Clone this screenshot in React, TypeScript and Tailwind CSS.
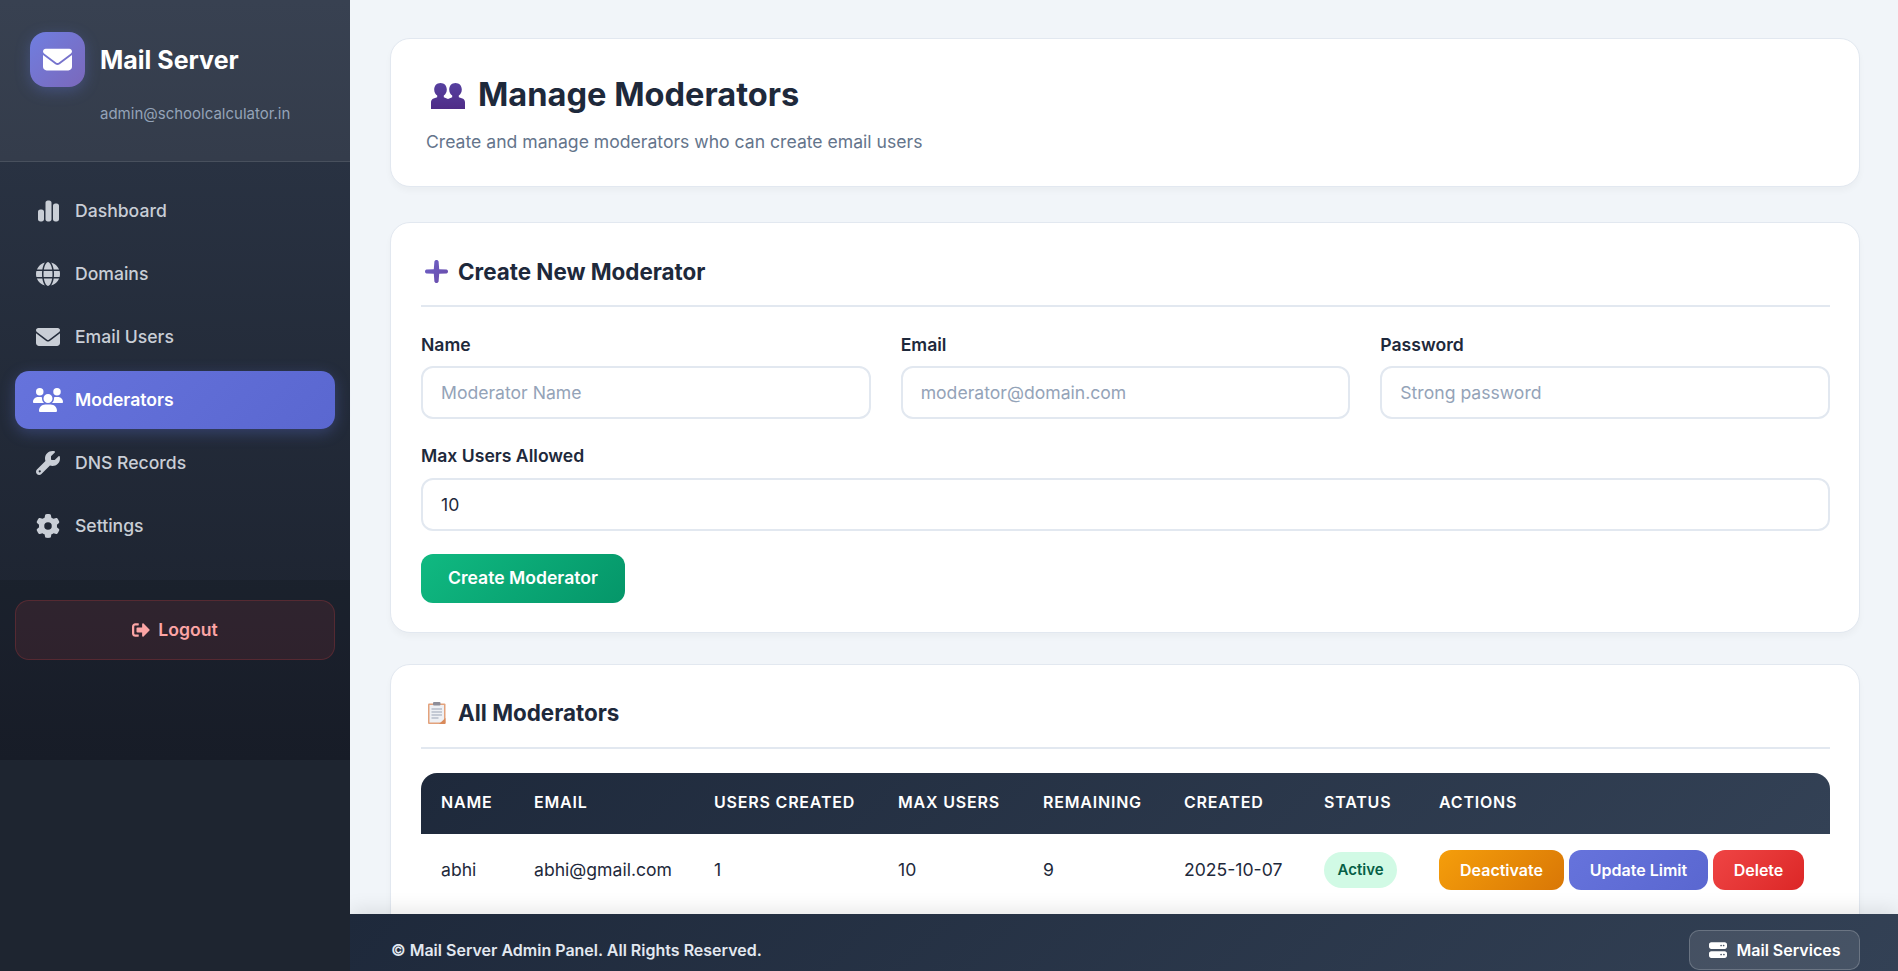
import React from "react";
import { FaEnvelope, FaGlobe, FaUsers, FaWrench, FaGear, FaServer, FaChartSimple } from "react-icons/fa6";
import { FaSignOutAlt } from "react-icons/fa";

const navItems = [
  { label: "Dashboard", icon: FaChartSimple, size: "w-[21px] h-[24px]" },
  { label: "Domains", icon: FaGlobe, size: "w-[24px] h-[24px]" },
  { label: "Email Users", icon: FaEnvelope, size: "w-[24px] h-[24px]" },
  { label: "Moderators", icon: FaUsers, size: "w-[30px] h-[24px]", active: true },
  { label: "DNS Records", icon: FaWrench, size: "w-[24px] h-[24px]" },
  { label: "Settings", icon: FaGear, size: "w-[24px] h-[24px]" },
];

const PeopleIcon = () => (
  <svg width="34" height="26" viewBox="0 0 34 26" className="shrink-0 mt-[3px]">
    <defs>
      <linearGradient id="people" x1="0" y1="0" x2="0" y2="1">
        <stop offset="0" stopColor="#56409f" />
        <stop offset="1" stopColor="#4f2c87" />
      </linearGradient>
    </defs>
    <path
      fill="url(#people)"
      d="M9.500 0c3.800 0 6.300 2.800 6.300 6.500 0 2.600-1.200 4.900-3 6.100v1.600c1.700.7 3.200 1.300 4.200 1.900V26H0v-6.500c0-2 1-3.200 2.600-3.900l3.600-1.400v-1.600C4.400 11.400 3.200 9.100 3.200 6.500 3.200 2.800 5.700 0 9.500 0z"
    />
    <path
      fill="url(#people)"
      d="M24.500 0c3.800 0 6.300 2.800 6.300 6.500 0 2.600-1.200 4.900-3 6.100v1.600l3.600 1.400c1.600.7 2.600 1.900 2.600 3.900V26H17V16.100c1-.6 2.500-1.200 4.200-1.900v-1.600c-1.800-1.200-3-3.500-3-6.100C18.200 2.800 20.700 0 24.500 0z"
    />
  </svg>
);

const PlusIcon = () => (
  <svg width="23" height="23" viewBox="0 0 23 23" className="shrink-0">
    <defs>
      <linearGradient id="plus" x1="0" y1="0" x2="1" y2="1">
        <stop offset="0" stopColor="#6d62c8" />
        <stop offset="1" stopColor="#6a4aa8" />
      </linearGradient>
    </defs>
    <path
      fill="url(#plus)"
      d="M11.500 0c1.100 0 1.900.6 2.100 1.500l.6 7.800 7.300.3c.9.2 1.500.9 1.500 1.900s-.6 1.700-1.500 1.900l-7.300.3-.6 7.800c-.2.900-1 1.500-2.100 1.500s-1.900-.6-2.100-1.500l-.6-7.800-7.300-.3C.6 13.200 0 12.500 0 11.500s.6-1.700 1.500-1.900l7.300-.3.6-7.800C9.600.6 10.400 0 11.500 0z"
    />
  </svg>
);

const ClipboardIcon = () => (
  <svg width="18" height="22" viewBox="0 0 18 22" className="shrink-0">
    <rect x="0" y="1.500" width="17.500" height="20.500" rx="1" fill="#e3a27c" />
    <rect x="1.500" y="3" width="14.500" height="17.500" fill="#eef0f4" />
    <path d="M17.500 16v5a1 1 0 0 1-1 1H11z" fill="#d98a5a" />
    <rect x="5" y="0" width="7.500" height="3.500" rx="1" fill="#8d8d98" />
    <path d="M3.500 7h10.500M3.500 10h10.500M3.500 13h10.500M3.500 16h7" stroke="#9aa3b5" strokeWidth="1" />
  </svg>
);

const Field = ({ label, placeholder, value }: { label: string; placeholder?: string; value?: string }) => (
  <div>
    <label className="block mb-[8px] text-[17.6px] leading-[26.4px] font-semibold text-[#1e293b]">{label}</label>
    <input
      readOnly
      placeholder={placeholder}
      value={value}
      className="block w-full h-[53px] px-[18px] border-2 border-[#e2e8f0] rounded-[12px] bg-white text-[17.6px] text-[#1e293b] placeholder:text-[#94a3b8] outline-none"
    />
  </div>
);

const heads = [
  { label: "Name", w: "w-[93px]" },
  { label: "Email", w: "w-[180px]" },
  { label: "Users Created", w: "w-[184px]" },
  { label: "Max Users", w: "w-[145px]" },
  { label: "Remaining", w: "w-[141px]" },
  { label: "Created", w: "w-[140px]" },
  { label: "Status", w: "w-[115px]" },
  { label: "Actions", w: "w-[411px]" },
];

const cells = ["abhi", "abhi@gmail.com", "1", "10", "9", "2025-10-07"];

const Sidebar = () => (
  <aside className="w-[350px] shrink-0 h-full bg-[#1e2530] z-20">
    <div className="h-[760px] flex flex-col bg-gradient-to-b from-[#2d3748] to-[#1a202c]">
      <div className="h-[162px] pl-[30px] pt-[32px] bg-white/5 border-b border-white/10 shrink-0">
        <div className="flex items-center gap-[15px]">
          <div className="w-[55px] h-[55px] rounded-[16px] bg-linear-135 from-[#6f7ee0] to-[#7a68bb] shadow-[0_4px_15px_rgba(102,126,234,0.3)] flex items-center justify-center">
            <FaEnvelope className="text-white text-[29px]" />
          </div>
          <span className="text-[25px] leading-[36px] font-bold text-white">Mail Server</span>
        </div>
        <div className="mt-[16px] pl-[70px] text-[15px] leading-[21px] text-[#94a3b8]">admin@schoolcalculator.in</div>
      </div>
      <nav className="flex flex-col gap-[5px] px-[15px] pt-[20px] h-[418px] shrink-0">
        {navItems.map(({ label, icon: Icon, size, active }) => (
          <a
            key={label}
            className={
              active
                ? "flex items-center gap-[12px] pl-[18px] h-[58px] rounded-[14px] text-white font-semibold text-[17.6px] bg-linear-135 from-[#6673dc] to-[#5a67d0] shadow-[0_4px_15px_rgba(102,126,234,0.3)]"
                : "flex items-center gap-[12px] pl-[18px] h-[58px] rounded-[14px] text-[#c9ced6] font-medium text-[17.6px]"
            }
          >
            <span className="w-[30px] flex justify-center">
              <Icon className={active ? `text-white ${size}` : `text-[#c9ced6] ${size}`} />
            </span>
            {label}
          </a>
        ))}
      </nav>
      <div className="flex-1 bg-black/10 px-[15px] pt-[20px]">
        <button className="w-full h-[60px] flex items-center justify-center gap-[8px] rounded-[14px] border border-[#ef4444]/20 bg-[#ef4444]/10 text-[#fca5a5] text-[17.6px] font-semibold">
          <FaSignOutAlt className="text-[18px]" />
          Logout
        </button>
      </div>
    </div>
  </aside>
);

export default function App() {
  return (
    <div className="flex w-full h-screen overflow-hidden bg-[#f1f5f9] font-['Inter',sans-serif]">
      <Sidebar />
      <div className="flex-1 min-w-0 h-full flex flex-col">
        <main className="flex-1 min-h-0 overflow-hidden pl-[40px] pr-[38px] pt-[38px]">
          <section className="h-[149px] mb-[35px] bg-white rounded-[20px] border border-[#e2e8f0] shadow-[0_4px_6px_rgba(0,0,0,0.03)] pl-[35px] pt-[31px]">
            <div className="flex items-center h-[48px]">
              <span className="pl-[5px] w-[52px] flex"><PeopleIcon /></span>
              <h1 className="text-[32.6px] leading-[48px] font-bold text-[#1e293b]">Manage Moderators</h1>
            </div>
            <p className="mt-[11px] text-[17.6px] leading-[26px] text-[#64748b]">Create and manage moderators who can create email users</p>
          </section>

          <section className="h-[411px] mb-[31px] bg-white rounded-[20px] border border-[#e2e8f0] shadow-[0_4px_6px_rgba(0,0,0,0.03)] pl-[30px] pr-[29px] pt-[30px]">
            <div className="border-b-2 border-[#e2e8f0] pb-[15px] mb-[25px]">
              <div className="flex items-center h-[37px]">
                <span className="w-[37px] pl-[4px] flex"><PlusIcon /></span>
                <h2 className="text-[22.4px] leading-[37px] font-bold text-[#1e293b]">Create New Moderator</h2>
              </div>
            </div>
            <div className="grid grid-cols-3 gap-[30px] mb-[24px]">
              <Field label="Name" placeholder="Moderator Name" />
              <Field label="Email" placeholder="moderator@domain.com" />
              <Field label="Password" placeholder="Strong password" />
            </div>
            <Field label="Max Users Allowed" value="10" />
            <button className="mt-[23px] w-[204px] h-[49px] rounded-[12px] bg-linear-135 from-[#10b981] to-[#059669] text-white text-[17.6px] font-semibold">
              Create Moderator
            </button>
          </section>

          <section className="h-[400px] bg-white rounded-[20px] border border-[#e2e8f0] shadow-[0_4px_6px_rgba(0,0,0,0.03)] pl-[30px] pr-[29px] pt-[29px]">
            <div className="border-b-2 border-[#e2e8f0] pb-[16px] mb-[24px]">
              <div className="flex items-center h-[37px]">
                <span className="w-[37px] pl-[7px] flex"><ClipboardIcon /></span>
                <h2 className="text-[22.4px] leading-[37px] font-bold text-[#1e293b]">All Moderators</h2>
              </div>
            </div>
            <table className="w-full table-fixed border-collapse">
              <thead>
                <tr className="h-[61px] bg-linear-135 from-[#1e293b] to-[#334155]">
                  {heads.map((h, i) => (
                    <th
                      key={h.label}
                      className={`${h.w} px-[20px] pb-[3px] text-left text-[16px] font-semibold uppercase tracking-[0.8px] text-white ${i === 0 ? "rounded-tl-[16px]" : ""} ${i === heads.length - 1 ? "rounded-tr-[16px]" : ""}`}
                    >
                      {h.label}
                    </th>
                  ))}
                </tr>
              </thead>
              <tbody>
                <tr className="h-[72px]">
                  {cells.map((c) => (
                    <td key={c} className="px-[20px] text-[17.6px] text-[#1e293b]">{c}</td>
                  ))}
                  <td className="px-[20px]">
                    <span className="inline-flex items-center h-[36px] px-[13.5px] rounded-full bg-[#d1fae5] text-[#065f46] text-[15px] font-semibold">Active</span>
                  </td>
                  <td className="px-[20px]">
                    <div className="flex gap-[5px]">
                      <button className="w-[125px] h-[40px] rounded-[12px] bg-linear-135 from-[#f59e0b] to-[#d97706] text-white text-[16px] font-semibold">Deactivate</button>
                      <button className="w-[139px] h-[40px] rounded-[12px] bg-linear-135 from-[#6673dc] to-[#5a67d0] text-white text-[16px] font-semibold">Update Limit</button>
                      <button className="w-[91px] h-[40px] rounded-[12px] bg-linear-135 from-[#ef4444] to-[#dc2626] text-white text-[16px] font-semibold">Delete</button>
                    </div>
                  </td>
                </tr>
              </tbody>
            </table>
          </section>
        </main>
        <footer className="h-[57px] shrink-0 z-10 flex items-start justify-between pt-[16px] pl-[41px] pr-[38px] bg-linear-135 from-[#1e293b] to-[#334155] shadow-[0_-4px_20px_rgba(0,0,0,0.1)]">
          <span className="h-[40px] flex items-center text-[16px] font-semibold text-[#e2e8f0]">© Mail Server Admin Panel. All Rights Reserved.</span>
          <button className="w-[171px] h-[40px] flex items-center justify-center gap-[10px] rounded-[10px] border border-white/20 bg-white/10 text-white text-[16px] font-semibold shrink-0">
            <FaServer className="text-[18px]" />
            Mail Services
          </button>
        </footer>
      </div>
    </div>
  );
}
